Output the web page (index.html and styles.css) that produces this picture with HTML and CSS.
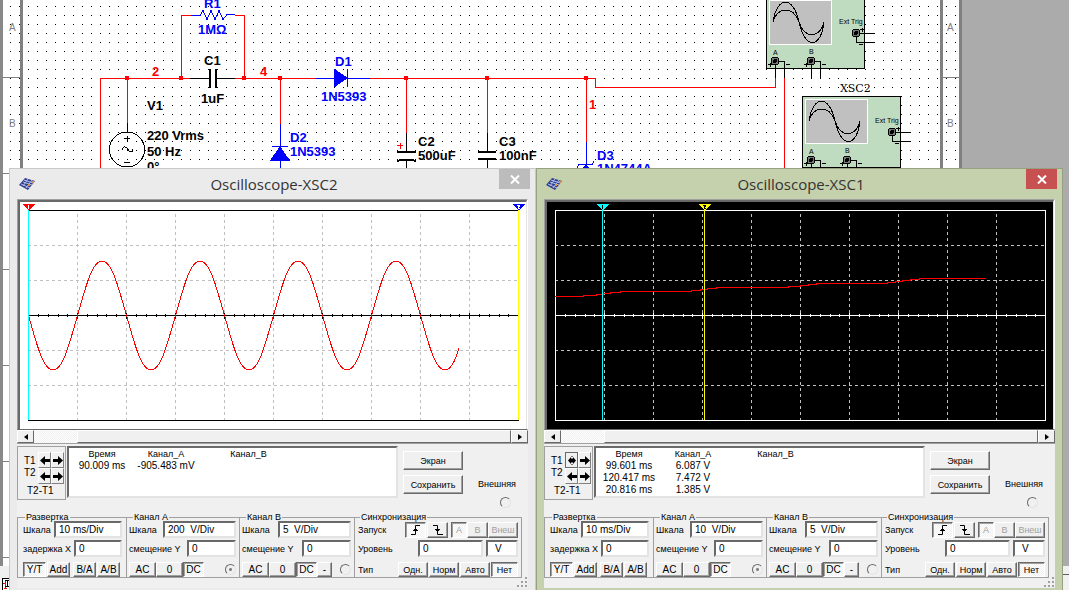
FILE: index.html
```html
<!DOCTYPE html>
<html lang="ru">
<head>
  <meta charset="UTF-8">
  <meta name="viewport" content="width=device-width, initial-scale=1.0">
  <title>Oscilloscope</title>
  <link rel="stylesheet" href="styles.css">
</head>
<body>
  <main class="workspace">
    <!-- Схема -->
    <svg class="schematic" width="100%" height="100%">
      <defs>
        <pattern id="dots" x="1" y="6" width="9" height="9" patternUnits="userSpaceOnUse">
          <rect width="1" height="1" fill="#000" />
        </pattern>
        <g id="port">
          <circle r="4" fill="#777" stroke="#000" />
          <circle r="2" fill="#000" />
        </g>
        <g id="scope">
          <rect x="766.5" y="-2.5" width="98" height="71" fill="#c0dcc0" stroke="#000" />
          <rect x="769.5" y=".5" width="62" height="44" fill="#c0c0c0" stroke="#fff" />
          <path class="thin" d="M773 22C777-4 793-5 799 22C805 50 821 49 824 22M773 22C777 6 794 6 799 22C804 39 820 39 824 22" />
          <path class="ink" d="M775.5 61V78M779 61.5h5.500V78M811.500 61V78M815 61.500h5.500V78M856 33.500h19M856.500 33v9.500h18.500" />
          <path class="ink" d="M768 64.500h4M770.500 62.500v4M786 64.500h4M804 64.500h4M806.500 62.500v4M822 64.500h4M860 29.500h4M862.500 27.500v4M859 44.500h4" />
          <use href="#port" x="775" y="61" />
          <use href="#port" x="811" y="61" />
          <use href="#port" x="856" y="33" />
          <text class="tiny" x="773" y="55">A</text>
          <text class="tiny" x="809" y="54">B</text>
          <text class="tiny" x="839" y="24">Ext Trig</text>
        </g>
      </defs>

      <rect x="3" width="957" height="566" fill="#fff" />
      <rect x="7" width="952" height="566" fill="url(#dots)" />
      <rect x="0" width="3" height="566" fill="#898989" />
      <rect x="20" width="3" height="566" fill="#808080" />
      <rect x="940" width="3" height="566" fill="#808080" />
      <rect x="959" width="3" height="566" fill="#808080" />
      <rect y="566" width="100%" height="100" fill="#f0f0f0" />
      <path d="M1062 574.500h20" stroke="#606060" />
      <path d="M3 77.500h17M3 173.500h7M3 269.500h7M3 365.500h7M3 461.500h7M3 557.500h7M943 77.500h16" stroke="#808080" />
      <text class="zone" x="9" y="31">A</text>
      <text class="zone" x="9" y="127">B</text>
      <text class="zone" x="947" y="31">A</text>
      <text class="zone" x="947" y="127">B</text>
      <rect x="2.500" y="578.500" width="14" height="14" fill="#fff" stroke="#000" />
      <path d="M3 583.500h3M5.500 581v7M4 588.500h3" fill="none" stroke="#f00" />
      <path d="M5 580.500h4M7.500 580v6M5 586.500h4" fill="none" stroke="#000" />

      <g class="wire">
        <path d="M100.500 170V78.500H190M127.500 78V123M181.500 78V15.500H191M235 15.500h9.500V78M235 78.500h81M280.500 78v46M370 78.500H595.500V87.500H775.500V78M406.500 78v55M487.500 78v55M586.500 78v64M784.500 78v92" />
        <path d="M397 145.500h6M400.500 142.500v6" />
      </g>
      <g fill="#f00">
        <circle cx="127" cy="78" r="2.200" /><circle cx="181" cy="78" r="2.200" />
        <circle cx="244" cy="78" r="2.200" /><circle cx="280" cy="78" r="2.200" />
        <circle cx="406" cy="78" r="2.200" /><circle cx="487" cy="78" r="2.200" />
        <circle cx="586" cy="78" r="2.200" />
      </g>
      <g class="blue">
        <path d="M191 15.500h9l3-5 4 9 4-9 4 9 4-9 4 9 4-5h8M316 78.500h54M347.500 69v18M280.500 124v46M272 146.500h16M586.500 142v28M577 168l2-3.500h13l2-3.500" fill="none" />
        <path d="M334 69v18l13-9zM280 147l9 13h-18zM586 165l8 9h-16z" fill="#00f" />
      </g>
      <path class="ink" d="M190 78.500h19M217 78.500h18M127.500 123v9M406.500 133v19M406.500 161v9M487.500 133v19M487.500 159v9M124 138.500h6M127.500 135.500v6M124 162.500h6M122 149.500c2-4 4-3 6 0s4 4 5 0" />
      <circle class="thin" cx="127" cy="149.500" r="17.500" />
      <path class="plate" d="M210 69v19M216 69v19M397 152h19M478 152h18M478 159h18M397 161q9-3 19 0" />
      <use href="#scope" />
      <use href="#scope" transform="translate(36 99)" />

      <g class="label">
        <text x="147" y="110">V1</text>
        <text x="147" y="140">220 Vrms</text>
        <text x="147" y="156">50 Hz</text>
        <text x="147" y="171">0°</text>
        <text x="204" y="65">C1</text>
        <text x="201" y="103">1uF</text>
        <text x="418" y="146">C2</text>
        <text x="418" y="160">500uF</text>
        <text x="499" y="146">C3</text>
        <text x="499" y="160">100nF</text>
      </g>
      <g class="label label-blue">
        <text x="204" y="8">R1</text>
        <text x="198" y="34">1MΩ</text>
        <text x="335" y="66">D1</text>
        <text x="321" y="101">1N5393</text>
        <text x="290" y="142">D2</text>
        <text x="290" y="156">1N5393</text>
        <text x="597" y="160">D3</text>
        <text x="597" y="173">1N4744A</text>
      </g>
      <g class="label label-red">
        <text x="152" y="76">2</text>
        <text x="260" y="76">4</text>
        <text x="589" y="109">1</text>
      </g>
      <text class="scope-name" x="840" y="92">XSC2</text>
    </svg>

    <!-- XSC2 -->
    <section class="window window-xsc2">
      <header class="titlebar">
        <svg class="app-icon" width="18" height="14" viewBox="0 0 18 14">
          <path d="M1 8L7 1l10 3-7 9z" fill="#31408c" />
          <path d="M3 7l9 4M5 5l9 3M6 3l9 3M5 9l5-7M8 11l6-8" stroke="#aebde8" />
          <path d="M10 7h2v2h-2zM14 4h2v2h-2z" fill="#d99245" />
        </svg>
        <h1 class="title">Oscilloscope-XSC2</h1>
        <button class="close" aria-label="Закрыть">
          <svg width="10" height="9" viewBox="0 0 10 9"><path d="M1 .5l8 8M9 .5l-8 8" stroke="#fff" stroke-width="2" /></svg>
        </button>
      </header>
      <div class="client">
        <div class="screen">
          <svg class="plot" viewBox="20 202 506 227">
            <defs>
              <g id="grid" fill="none">
                <path d="M77.500 214V420M126.500 214V420M175.500 214V420M224.500 214V420M273.500 214V420M322.500 214V420M371.500 214V420M420.500 214V420M469.500 214V420M28 245.500H518M28 280.500H518M28 350.500H518M28 385.500H518" stroke="#c0c0c0" stroke-dasharray="3 3" />
              </g>
              <g id="axis" fill="none">
                <path d="M28 210.500H518.500M28 420.500H518.500M28 315.500H518" />
                <path d="M37.900 315.500H518" stroke-width="3" stroke-dasharray="1 8.800" />
                <path d="M77 315.500H518" stroke-width="6" stroke-dasharray="1 48" />
              </g>
            </defs>
            <use href="#grid" />
            <use href="#axis" stroke="#000" />
            <path d="M28.500 315.500C37 345 43 370 53 370S69 345 77.500 315.500S92 261 102 261S118 286 126.500 315.500S141 370 151 370S167 345 175.500 315.500S190 261 200 261S216 286 224.500 315.500S239 370 249 370S265 345 273.500 315.500S288 261 298 261S314 286 322.500 315.500S337 370 347 370S363 345 371.500 315.500S386 261 396 261S412 286 420.500 315.500S435 370 445 370C451 370 455 362 459 348" fill="none" stroke="#f00" />
            <path d="M28.500 210V420" stroke="#0ff" />
            <path d="M518.500 210V420" stroke="#ff0" />
            <path d="M22 204h13l-6.500 6.500z" fill="#f00" />
            <path d="M28.500 205v4" stroke="#fff" />
            <path d="M512 204h13l-6.500 6.500z" fill="#00f" />
            <path d="M517 205.500h2v1l-1 1v1h2" fill="none" stroke="#fff" />
          </svg>
        </div>
        <div class="scrollbar">
          <button class="scroll-arrow" aria-label="Влево"><svg width="4" height="6"><path d="M4 0v6L0 3z" /></svg></button>
          <div class="scroll-track"></div>
          <div class="scroll-thumb"></div>
          <button class="scroll-arrow" aria-label="Вправо"><svg width="4" height="6"><path d="M0 0v6l4-3z" /></svg></button>
        </div>
        <div class="readout-row">
          <div class="cursors">
            <div class="cursor-names"><span>T1</span><span>T2</span></div>
            <div class="cursor-buttons">
              <button aria-label="T1 влево"><svg width="10" height="9"><path d="M0 4.500L5 0v3h5v3H5v3z" /></svg></button>
              <button aria-label="T1 вправо"><svg width="10" height="9"><path d="M10 4.500L5 0v3H0v3h5v3z" /></svg></button>
              <button aria-label="T2 влево"><svg width="10" height="9"><path d="M0 4.500L5 0v3h5v3H5v3z" /></svg></button>
              <button aria-label="T2 вправо"><svg width="10" height="9"><path d="M10 4.500L5 0v3H0v3h5v3z" /></svg></button>
            </div>
            <span class="cursor-diff">T2-T1</span>
          </div>
          <div class="readout">
            <table>
              <tr><th>Время</th><th>Канал_A</th><th>Канал_B</th></tr>
              <tr><td>90.009 ms</td><td>-905.483 mV</td><td></td></tr>
            </table>
          </div>
          <div class="actions">
            <button class="btn">Экран</button>
            <button class="btn">Сохранить</button>
          </div>
          <label class="external">Внешняя<input type="radio" name="ext2"></label>
        </div>
        <form class="settings">
          <fieldset class="timebase">
            <legend>Развертка</legend>
            <div class="field"><label for="s2-time">Шкала</label><input id="s2-time" type="text" value="10 ms/Div"></div>
            <div class="field"><label for="s2-x">задержка X</label><input id="s2-x" type="text" value="0"></div>
            <div class="modes">
              <button type="button" class="btn pressed">Y/T</button><button type="button" class="btn">Add</button><button type="button" class="btn">B/A</button><button type="button" class="btn">A/B</button>
            </div>
          </fieldset>
          <fieldset class="channel">
            <legend>Канал A</legend>
            <div class="field"><label for="s2-a">Шкала</label><input id="s2-a" type="text" value="200  V/Div"></div>
            <div class="field"><label for="s2-ay">смещение Y</label><input id="s2-ay" type="text" value="0"></div>
            <div class="modes">
              <button type="button" class="btn">AC</button><button type="button" class="btn">0</button><button type="button" class="btn pressed">DC</button>
              <input type="radio" name="ch2" aria-label="Канал A" checked disabled>
            </div>
          </fieldset>
          <fieldset class="channel">
            <legend>Канал B</legend>
            <div class="field"><label for="s2-b">Шкала</label><input id="s2-b" type="text" value="5  V/Div"></div>
            <div class="field"><label for="s2-by">смещение Y</label><input id="s2-by" type="text" value="0"></div>
            <div class="modes">
              <button type="button" class="btn">AC</button><button type="button" class="btn">0</button><button type="button" class="btn pressed">DC</button><button type="button" class="btn minus">-</button>
              <input type="radio" name="ch2" aria-label="Канал B">
            </div>
          </fieldset>
          <fieldset class="trigger">
            <legend>Синхронизация</legend>
            <div class="field">
              <span>Запуск</span>
              <div class="edges">
                <button type="button" class="btn pressed" aria-label="Фронт"><svg width="10" height="10"><path class="edge" d="M0 9.500h4.500V.500H9M2 5.500h5M3 4.500h3" /></svg></button>
                <button type="button" class="btn" aria-label="Спад"><svg width="10" height="10"><path class="edge" d="M0 .500h4.500v9H10M2 4.500h5M3 5.500h3" /></svg></button>
              </div>
              <div class="sources">
                <button type="button" class="btn pressed" disabled>A</button><button type="button" class="btn" disabled>B</button><button type="button" class="btn" disabled>Внеш</button>
              </div>
            </div>
            <div class="field level"><label for="s2-lv">Уровень</label><input id="s2-lv" type="text" value="0"><input class="unit" type="text" value="V" aria-label="Единицы"></div>
            <div class="modes">
              <span>Тип</span>
              <button type="button" class="btn">Одн.</button><button type="button" class="btn">Норм</button><button type="button" class="btn">Авто</button><button type="button" class="btn pressed">Нет</button>
            </div>
          </fieldset>
        </form>
        <svg class="grip" width="11" height="11"><path d="M8 0h2v2h-2zM4 4h2v2h-2zM8 4h2v2h-2zM0 8h2v2h-2zM4 8h2v2h-2zM8 8h2v2h-2z" fill="#a0a0a0" /></svg>
      </div>
    </section>

    <!-- XSC1 -->
    <section class="window window-xsc1 active">
      <header class="titlebar">
        <svg class="app-icon" width="18" height="14" viewBox="0 0 18 14">
          <path d="M1 8L7 1l10 3-7 9z" fill="#31408c" />
          <path d="M3 7l9 4M5 5l9 3M6 3l9 3M5 9l5-7M8 11l6-8" stroke="#aebde8" />
          <path d="M10 7h2v2h-2zM14 4h2v2h-2z" fill="#d99245" />
        </svg>
        <h1 class="title">Oscilloscope-XSC1</h1>
        <button class="close" aria-label="Закрыть">
          <svg width="10" height="9" viewBox="0 0 10 9"><path d="M1 .5l8 8M9 .5l-8 8" stroke="#fff" stroke-width="2" /></svg>
        </button>
      </header>
      <div class="client">
        <div class="screen screen-dark">
          <svg class="plot" viewBox="20 202 506 227">
            <use href="#grid" />
            <use href="#axis" stroke="#fff" />
            <path d="M28.500 210V420M518.500 210V420" stroke="#fff" />
            <path d="M28 296.500h28v-1h13v-1h7v-1h7v-1h10v-1h71v-1h9v-1h7v-1h9v-1h72v-1h12v-1h8v-1h8v-1h71v-1h8v-1h7v-1h8v-1h9v-1h67" fill="none" stroke="#f00" />
            <path d="M75.500 210V420" stroke="#0ff" />
            <path d="M177.500 210V420" stroke="#ff0" />
            <path d="M69 204h13l-6.500 6.500z" fill="#0ff" />
            <path d="M75.500 205v4" stroke="#000" />
            <path d="M171 204h13l-6.500 6.500z" fill="#ff0" />
            <path d="M176 205.500h2v1l-1 1v1h2" fill="none" stroke="#000" />
          </svg>
        </div>
        <div class="scrollbar">
          <button class="scroll-arrow" aria-label="Влево"><svg width="4" height="6"><path d="M4 0v6L0 3z" /></svg></button>
          <div class="scroll-track"></div>
          <div class="scroll-thumb"></div>
          <button class="scroll-arrow" aria-label="Вправо"><svg width="4" height="6"><path d="M0 0v6l4-3z" /></svg></button>
        </div>
        <div class="readout-row">
          <div class="cursors">
            <div class="cursor-names"><span>T1</span><span>T2</span></div>
            <div class="cursor-buttons">
              <button class="focused" aria-label="T1 влево"><svg width="10" height="9"><path d="M1 4.500L4 1v2h2V1l3 3.500L6 8V6H4v2z" /><path d="M5 0v9" stroke="#000" stroke-dasharray="1 1" /></svg></button>
              <button aria-label="T1 вправо"><svg width="10" height="9"><path d="M10 4.500L5 0v3H0v3h5v3z" /></svg></button>
              <button aria-label="T2 влево"><svg width="10" height="9"><path d="M0 4.500L5 0v3h5v3H5v3z" /></svg></button>
              <button aria-label="T2 вправо"><svg width="10" height="9"><path d="M10 4.500L5 0v3H0v3h5v3z" /></svg></button>
            </div>
            <span class="cursor-diff">T2-T1</span>
          </div>
          <div class="readout">
            <table>
              <tr><th>Время</th><th>Канал_A</th><th>Канал_B</th></tr>
              <tr><td>99.601 ms</td><td>6.087 V</td><td></td></tr>
              <tr><td>120.417 ms</td><td>7.472 V</td><td></td></tr>
              <tr><td>20.816 ms</td><td>1.385 V</td><td></td></tr>
            </table>
          </div>
          <div class="actions">
            <button class="btn">Экран</button>
            <button class="btn">Сохранить</button>
          </div>
          <label class="external">Внешняя<input type="radio" name="ext1"></label>
        </div>
        <form class="settings">
          <fieldset class="timebase">
            <legend>Развертка</legend>
            <div class="field"><label for="s1-time">Шкала</label><input id="s1-time" type="text" value="10 ms/Div"></div>
            <div class="field"><label for="s1-x">задержка X</label><input id="s1-x" type="text" value="0"></div>
            <div class="modes">
              <button type="button" class="btn pressed">Y/T</button><button type="button" class="btn">Add</button><button type="button" class="btn">B/A</button><button type="button" class="btn">A/B</button>
            </div>
          </fieldset>
          <fieldset class="channel">
            <legend>Канал A</legend>
            <div class="field"><label for="s1-a">Шкала</label><input id="s1-a" type="text" value="10  V/Div"></div>
            <div class="field"><label for="s1-ay">смещение Y</label><input id="s1-ay" type="text" value="0"></div>
            <div class="modes">
              <button type="button" class="btn">AC</button><button type="button" class="btn">0</button><button type="button" class="btn pressed">DC</button>
              <input type="radio" name="ch1" aria-label="Канал A" checked disabled>
            </div>
          </fieldset>
          <fieldset class="channel">
            <legend>Канал B</legend>
            <div class="field"><label for="s1-b">Шкала</label><input id="s1-b" type="text" value="5  V/Div"></div>
            <div class="field"><label for="s1-by">смещение Y</label><input id="s1-by" type="text" value="0"></div>
            <div class="modes">
              <button type="button" class="btn">AC</button><button type="button" class="btn">0</button><button type="button" class="btn pressed">DC</button><button type="button" class="btn minus">-</button>
              <input type="radio" name="ch1" aria-label="Канал B">
            </div>
          </fieldset>
          <fieldset class="trigger">
            <legend>Синхронизация</legend>
            <div class="field">
              <span>Запуск</span>
              <div class="edges">
                <button type="button" class="btn pressed" aria-label="Фронт"><svg width="10" height="10"><path class="edge" d="M0 9.500h4.500V.500H9M2 5.500h5M3 4.500h3" /></svg></button>
                <button type="button" class="btn" aria-label="Спад"><svg width="10" height="10"><path class="edge" d="M0 .500h4.500v9H10M2 4.500h5M3 5.500h3" /></svg></button>
              </div>
              <div class="sources">
                <button type="button" class="btn pressed" disabled>A</button><button type="button" class="btn" disabled>B</button><button type="button" class="btn" disabled>Внеш</button>
              </div>
            </div>
            <div class="field level"><label for="s1-lv">Уровень</label><input id="s1-lv" type="text" value="0"><input class="unit" type="text" value="V" aria-label="Единицы"></div>
            <div class="modes">
              <span>Тип</span>
              <button type="button" class="btn">Одн.</button><button type="button" class="btn">Норм</button><button type="button" class="btn">Авто</button><button type="button" class="btn pressed">Нет</button>
            </div>
          </fieldset>
        </form>
        <svg class="grip" width="11" height="11"><path d="M8 0h2v2h-2zM4 4h2v2h-2zM8 4h2v2h-2zM0 8h2v2h-2zM4 8h2v2h-2zM8 8h2v2h-2z" fill="#a0a0a0" /></svg>
      </div>
    </section>
  </main>
</body>
</html>
```

FILE: styles.css
```css
* {
  margin: 0;
  padding: 0;
  box-sizing: border-box;
}

body {
  font-family: "Liberation Sans", Arial, sans-serif;
  font-size: 9px;
  line-height: 12px;
  color: #000;
  overflow: hidden;
}

button,
input {
  font: inherit;
  color: inherit;
}

.workspace {
  position: relative;
  height: 100vh;
  overflow: hidden;
  background-color: #ababab;
}

/* Схема */
.schematic {
  display: block;
  shape-rendering: crispEdges;
}

.wire {
  fill: none;
  stroke: #f00;
}

.blue {
  stroke: #00f;
}

.ink,
.thin {
  fill: none;
  stroke: #000;
}

.plate {
  fill: none;
  stroke: #000;
  stroke-width: 2;
}

.label {
  font-size: 13px;
  font-weight: bold;
}

.label-blue {
  fill: #00f;
}

.label-red {
  fill: #f00;
}

.tiny {
  font-size: 7px;
}

.zone {
  font-size: 10px;
  fill: #808080;
}

.scope-name {
  font-family: "DejaVu Serif", serif;
  font-size: 11px;
}

/* Окна осциллографов */
.window {
  position: absolute;
  top: 168px;
  width: 527px;
  padding: 0 7px 8px;
  background-color: #ebebeb;
  border: 1px solid #c8c8c8;
}

.window-xsc2 {
  left: 9px;
}

.window-xsc1 {
  left: 536px;
}

.window.active {
  background-color: #c5d0ac;
  border-color: #98a084;
}

.titlebar {
  position: relative;
  display: flex;
  align-items: center;
  height: 30px;
  padding-left: 1px;
}

.title {
  flex: 1;
  margin-right: 16px;
  font-family: "Open Sans", "Noto Sans", sans-serif;
  font-size: 15px;
  font-weight: normal;
  line-height: 20px;
  text-align: center;
  color: #333;
}

.close {
  position: absolute;
  top: 0;
  right: -2px;
  display: flex;
  align-items: center;
  justify-content: center;
  width: 31px;
  height: 20px;
  border: none;
  background-color: #bcbcbc;
}

.active .close {
  background-color: #c75050;
}

.client {
  position: relative;
  padding-bottom: 10px;
  background-color: #f0f0f0;
}

.screen {
  border: 1px solid;
  border-color: #a0a0a0 #fff #696969 #a0a0a0;
  background-color: #fff;
}

.plot {
  display: block;
  width: 100%;
  border: 2px solid;
  border-color: #696969 #e3e3e3 #fff #696969;
  border-bottom-width: 0;
  border-right-width: 1px;
  shape-rendering: crispEdges;
}

.screen-dark .plot {
  background-color: #000;
}

.scrollbar {
  display: flex;
  height: 14px;
  border-bottom: 1px solid #a0a0a0;
}

.scroll-arrow,
.scroll-thumb {
  border: 1px solid;
  border-color: #fff #696969 #696969 #fff;
  background-color: #f0f0f0;
}

.scroll-arrow {
  display: flex;
  align-items: center;
  justify-content: center;
  width: 17px;
}

.scroll-track {
  width: 43px;
}

.scroll-thumb {
  flex: 1;
}

.scroll-track,
.pressed {
  background: repeating-conic-gradient(#fff 0 25%, #f0f0f0 0 50%) 0 0 / 2px 2px;
}

/* Показания курсоров */
.readout-row {
  display: flex;
  height: 56px;
  padding-top: 2px;
}

.cursors {
  display: grid;
  grid-template-columns: 14px 26px;
  grid-template-rows: 33px 12px;
  width: 49px;
  padding: 5px 0 0 6px;
  border: 1px solid #a0a0a0;
}

.cursor-names {
  display: flex;
  flex-direction: column;
  padding-top: 3px;
}

.cursor-buttons {
  display: grid;
  grid-template-columns: 13px 13px;
  grid-auto-rows: 16px;
}

.cursor-buttons button {
  display: flex;
  align-items: center;
  justify-content: center;
  border: 1px solid;
  border-color: #fff #808080 #808080 #fff;
  background-color: #f0f0f0;
}

.cursor-buttons .focused {
  border-color: #696969;
}

.cursor-diff {
  grid-column: 1 / 3;
  padding-left: 3px;
}

.cursor-names,
.cursor-diff,
.readout td,
.timebase .btn,
.channel .btn,
.field input {
  font-size: 10px;
}

.readout {
  width: 331px;
  height: 52px;
  margin-left: 1px;
  border: 2px solid;
  border-color: #696969 #e3e3e3 #e3e3e3 #696969;
  background-color: #fff;
}

.readout table {
  border-collapse: collapse;
  table-layout: fixed;
  width: 237px;
}

.readout th,
.readout td {
  height: 12px;
  font-weight: normal;
  text-align: center;
}

.readout th:nth-child(1) {
  width: 66px;
}

.readout th:nth-child(2) {
  width: 62px;
}

.readout th:nth-child(3) {
  padding-right: 6px;
}

.btn {
  border: 1px solid;
  border-color: #fff #696969 #696969 #fff;
  box-shadow: inset -1px -1px #a0a0a0;
  background-color: #f0f0f0;
  line-height: 12px;
  white-space: nowrap;
}

.btn.pressed {
  border-color: #696969 #fff #fff #696969;
  box-shadow: inset 1px 1px #a0a0a0;
}

.btn:disabled {
  color: #a0a0a0;
}

.actions {
  display: flex;
  flex-direction: column;
  gap: 5px;
  width: 60px;
  margin-left: 5px;
  padding-top: 5px;
}

.actions .btn {
  height: 19px;
}

.external {
  display: flex;
  flex-direction: column;
  align-items: center;
  flex: 1;
  gap: 7px;
  padding-top: 32px;
  margin-left: 3px;
}

input[type="radio"] {
  appearance: none;
  flex: none;
  width: 11px;
  height: 11px;
  border: 1px solid;
  border-color: #696969 #e3e3e3 #e3e3e3 #696969;
  border-radius: 50%;
  background-color: #f0f0f0;
}

.external input {
  margin-left: 16px;
}

input[type="radio"]:checked {
  background: radial-gradient(circle, #808080 0 1px, #f0f0f0 2px);
}

/* Настройки */
.settings {
  display: grid;
  grid-template-columns: 109px 113px 115px 1fr;
  padding: 13px 6px 0 0;
}

fieldset {
  min-width: 0;
  border: 1px solid #a0a0a0;
  border-right-width: 0;
  padding: 0 4px 0 5px;
}

fieldset.trigger {
  border-right-width: 1px;
  padding: 0 3px 0 3px;
}

fieldset.channel {
  padding: 0 3px 0 2px;
}

legend {
  margin-left: 2px;
  padding: 0 1px;
  line-height: 8px;
}

.channel legend {
  margin-left: 4px;
}

.field {
  display: flex;
  align-items: center;
  justify-content: space-between;
  gap: 3px;
  height: 17px;
  margin-bottom: 2px;
}

.field label {
  flex: none;
}

.field input {
  min-width: 0;
  height: 17px;
  padding: 0 3px;
  border: 2px solid;
  border-color: #696969 #e3e3e3 #e3e3e3 #696969;
  background-color: #fff;
  white-space: pre;
}

.timebase .field input {
  width: 68px;
}

.channel .field input {
  width: 73px;
}

.timebase .field + .field input,
.channel .field + .field input {
  width: 49px;
}

.modes {
  display: flex;
  height: 15px;
  margin-top: 5px;
}

.timebase .modes {
  gap: 1px;
}

.timebase .btn {
  width: 23px;
}

.timebase .btn:nth-child(3) {
  margin-left: 2px;
}

.channel .btn {
  width: 27px;
}

.channel .btn.pressed {
  width: 21px;
}

.channel .minus {
  width: 15px;
}

.channel .modes input {
  margin: 2px 0 0 auto;
}

.trigger .modes {
  gap: 1px;
}

.trigger .modes span {
  flex: 1;
  align-self: center;
}

.trigger .modes .btn {
  width: 30px;
}

.trigger .modes .btn.pressed {
  width: 27px;
}

.edges,
.sources {
  display: flex;
}

.edges {
  gap: 1px;
  margin-left: auto;
}

.edges .btn {
  display: flex;
  align-items: center;
  justify-content: center;
  width: 21px;
  height: 16px;
}

.edge {
  fill: none;
  stroke: #000;
}

.sources .btn {
  width: 21px;
  height: 16px;
}

.sources .btn:first-child {
  width: 16px;
}

.sources .btn:last-child {
  width: 30px;
}

.level input {
  width: 65px;
  margin-left: auto;
}

.level input.unit {
  width: 32px;
  margin-left: 0;
  padding-left: 7px;
}

.grip {
  position: absolute;
  right: 0;
  bottom: 0;
}
```
